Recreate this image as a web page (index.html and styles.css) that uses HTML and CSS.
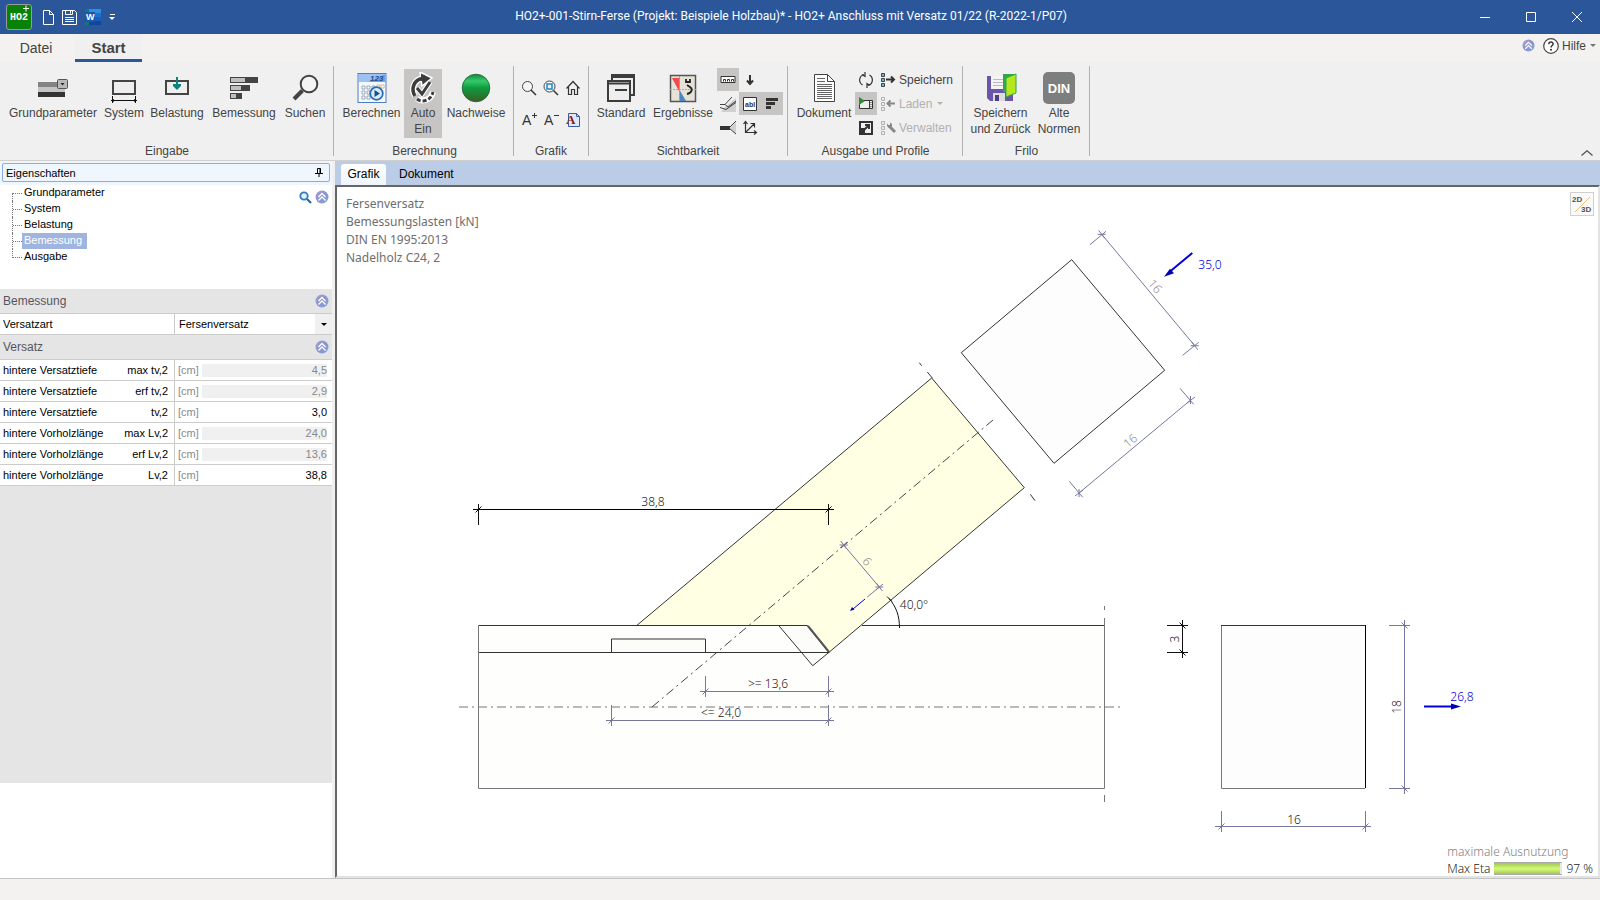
FILE: index.html
```html
<!DOCTYPE html>
<html lang="de">
<head>
<meta charset="utf-8">
<title>HO2+ Anschluss mit Versatz</title>
<link rel="stylesheet" href="styles.css">
</head>
<body>
<svg class="defs" aria-hidden="true">
  <linearGradient id="lilac" x1="0" y1="0" x2="1" y2="1"><stop offset="0" stop-color="#a9a0cf"/><stop offset=".5" stop-color="#8b93d0"/><stop offset="1" stop-color="#7fa9d8"/></linearGradient>
  <symbol id="collapse" viewBox="0 0 14 14"><circle cx="7" cy="7" r="6.5" fill="url(#lilac)"/><path d="M3.5 7 7 3.5 10.500 7M3.500 10.500 7 7l3.500 3.500" fill="none" stroke="#fff" stroke-width="1.300"/></symbol>
  <symbol id="profile" viewBox="0 0 16 16"><path d="M.5 1.500h3v3h-3zM.5 6.500h3v3h-3zM.5 11.500h3v3h-3z" stroke="currentColor"/></symbol>
</svg>

<header class="titlebar">
  <div class="quick">
    <svg class="app-logo" viewBox="0 0 26 26" role="img" aria-label="HO2+"><rect x=".5" y=".5" width="25" height="25" rx="2.500" fill="#078207" stroke="#9a9a9a"/><text x="4" y="16" class="logo-text">HO2</text><path d="M20 1.500v6M17 4.500h6" stroke="#fff"/></svg>
    <button class="quick-btn" aria-label="Neu"><svg width="11" height="15" viewBox="0 0 11 15"><path d="M.5.5h6l4 4v10H.5zM6.500.5v4h4" fill="none" stroke="#fff"/></svg></button>
    <button class="quick-btn" aria-label="Sichern"><svg width="15" height="15" viewBox="0 0 15 15"><path d="M.5.5h12l2 2v12H.5zM3.500.5v4h7v-4M8.500 1v2.500M3 7.500h9M3 9.500h9M3 11.500h9" fill="none" stroke="#fff"/></svg></button>
    <button class="quick-btn" aria-label="Word"><svg width="16" height="16" viewBox="0 0 16 16"><path d="M4 0h12v4H4z" fill="#2b90e0"/><path d="M4 4h12v4H4z" fill="#1f70cc"/><path d="M4 8h12v4H4z" fill="#1a5cbd"/><path d="M4 12h12v4H4z" fill="#12459e"/><path d="M0 0h4v3H0zM0 13h4v3H0z" fill="#107a78"/><path d="M0 3h10v10H0z" fill="#1b55b0"/><text x="1" y="11" class="word-text">W</text></svg></button>
    <button class="quick-btn" aria-label="Anpassen"><svg width="7" height="7" viewBox="0 0 7 7"><path d="M1 .5h5" stroke="#fff"/><path d="M0 3h6L3 6z" fill="#fff"/></svg></button>
  </div>
  <h1 class="title">HO2+-001-Stirn-Ferse (Projekt: Beispiele Holzbau)* - HO2+ Anschluss mit Versatz 01/22 (R-2022-1/P07)</h1>
  <div class="window-buttons">
    <button aria-label="Minimieren"><svg width="10" height="10"><path d="M0 5.500h10" stroke="#fff"/></svg></button>
    <button aria-label="Maximieren"><svg width="10" height="10"><path d="M.5.5h9v9h-9z" fill="none" stroke="#fff"/></svg></button>
    <button aria-label="Schließen"><svg width="10" height="10"><path d="M0 0l10 10M10 0 0 10" stroke="#fff"/></svg></button>
  </div>
</header>

<nav class="ribbon-tabs">
  <button class="ribbon-tab">Datei</button>
  <button class="ribbon-tab is-active">Start</button>
  <div class="help">
    <button aria-label="Einklappen"><svg width="13" height="13"><use href="#collapse"/></svg></button>
    <button class="help-btn"><svg width="16" height="16" viewBox="0 0 16 16"><circle cx="8" cy="8" r="7.300" fill="#fff" stroke="#444" stroke-width="1.200"/><path d="M5.800 6.200c0-3 4.500-2.800 4.300-.2C10 7.500 8 7.600 8 9.500" fill="none" stroke="#333" stroke-width="1.500"/><circle cx="8" cy="11.700" r="1" fill="#333"/></svg>Hilfe<i class="caret"></i></button>
  </div>
</nav>

<section class="ribbon">
  <div class="group">
    <div class="tools">
      <button class="big w96"><svg width="32" height="32" viewBox="0 0 32 32"><path d="M1 10h27v5H1z" fill="#848484"/><path d="M1 15h27v5H1z" fill="#c4c4c4"/><path d="M1 20h27v5H1z" fill="#333"/><rect x="20.500" y="7.500" width="10" height="9" rx="1" fill="#b9b9b9" stroke="#555"/><path d="M23.500 11h4l-2 2.500z" fill="#222"/></svg>Grundparameter</button>
      <button class="big w46"><svg width="32" height="32" viewBox="0 0 32 32"><path d="M5 9h22v13H5z" fill="#eee" stroke="#444" stroke-width="2"/><path d="M3 28.500h26M4.500 24v7M27.500 24v7" stroke="#111"/><path d="M3 28.500l3-1.500v3zM29 28.500l-3-1.500v3z" fill="#111"/></svg>System</button>
      <button class="big w60"><svg width="32" height="32" viewBox="0 0 32 32"><path d="M5 9h22v13H5z" fill="#eee" stroke="#444" stroke-width="2"/><path d="M15 5h2v7h3v2l-4 4-4-4v-2h3z" fill="#0b8580"/></svg>Belastung</button>
      <button class="big w74"><svg width="32" height="32" viewBox="0 0 32 32"><path d="M2 5h28v6H2zM2 13h20v6H2zM2 21h12v6H2z" fill="#444"/><path d="M3 6h14v4H3zM3 14h10v4H3zM3 22h5v4H3z" fill="#bfbfbf"/></svg>Bemessung</button>
      <button class="big w48"><svg width="32" height="32" viewBox="0 0 32 32"><circle cx="20" cy="12" r="8.300" fill="#f4f4f4" stroke="#444" stroke-width="2"/><path d="M13.500 18.500 5 27" stroke="#444" stroke-width="4"/></svg>Suchen</button>
    </div>
    <h2>Eingabe</h2>
  </div>

  <div class="group">
    <div class="tools">
      <button class="big w65"><svg width="32" height="32" viewBox="0 0 32 32"><rect x="2" y="1.500" width="28" height="29" fill="#f3f8fe" stroke="#4f7fc4"/><path d="M2.500 2h27v8h-27z" fill="#6fa2ea"/><path d="M2.500 2h27L12 10H2.500z" fill="#9cc2f4"/><text x="14" y="9" class="tiny-num">123</text><g fill="#fff" stroke="#8793a8" stroke-width=".8"><path d="M6 14h3v3H6zM11 14h3v3h-3zM16 14h3v3h-3zM6 19h3v3H6zM11 19h3v3h-3zM6 24h3v3H6zM11 24h3v3h-3z"/><path d="M21 13h3v3h-3zM25 13h3v3h-3z" stroke="#e3a75a"/></g><circle cx="20.500" cy="21.500" r="6.300" fill="#d9ebfc" stroke="#2c6db0" stroke-width="1.800"/><path d="M18.500 18v7l5.500-3.500z" fill="#17518f"/></svg>Berechnen</button>
      <button class="big w38 is-on" aria-pressed="true"><svg width="32" height="32" viewBox="0 0 32 32"><g fill="none" stroke="#fff" stroke-width="6"><path d="M15 6.500C7 8 3.500 17 8 24"/><path d="M10 26.500c5 4 14 2 16-6.500"/></g><path d="M13 0l12 6-10 8z" fill="#3c3c3c" stroke="#fff" stroke-width="1.500"/><path d="M15 6.500C7 8 3.500 17 8 24" fill="none" stroke="#3c3c3c" stroke-width="3.500"/><path d="M14 3h4v6h-4z" fill="#3c3c3c"/><path d="M10 27c5 4 14 2 16-7" fill="none" stroke="#3c3c3c" stroke-width="3" stroke-dasharray="4 2"/><path d="M10 16l5 6 8-12" fill="none" stroke="#fff" stroke-width="5"/><path d="M10 16l5 6 8-12" fill="none" stroke="#3c3c3c" stroke-width="3"/></svg>Auto<br>Ein</button>
      <button class="big w68"><svg width="32" height="32" viewBox="0 0 32 32"><defs><linearGradient id="ball" x1="0" y1="0" x2="0" y2="1"><stop offset="0" stop-color="#0f8a3d"/><stop offset=".25" stop-color="#35c96a"/><stop offset=".5" stop-color="#0c9c3e"/><stop offset="1" stop-color="#3e5d24"/></linearGradient></defs><circle cx="16" cy="16" r="13.800" fill="url(#ball)" stroke="#17602d" stroke-width=".8"/></svg>Nachweise</button>
    </div>
    <h2>Berechnung</h2>
  </div>

  <div class="group">
    <div class="tools zoom-grid">
      <button aria-label="Zoom"><svg width="16" height="16" viewBox="0 0 16 16"><circle cx="6.500" cy="6.500" r="5" fill="#f7f7f7" stroke="#444"/><path d="M10 10l5 5" stroke="#333" stroke-width="1.500"/></svg></button>
      <button aria-label="Ausschnitt"><svg width="16" height="16" viewBox="0 0 16 16"><circle cx="6.500" cy="6.500" r="5.500" fill="#f7f7f7" stroke="#444"/><path d="M10.500 10.500l4.500 4.500" stroke="#333" stroke-width="1.500"/><rect x="4" y="4" width="5" height="5" fill="#e8f3fb" stroke="#1e86c8" stroke-width="1.500"/></svg></button>
      <button aria-label="Gesamtansicht"><svg width="16" height="16" viewBox="0 0 16 16"><path d="M1.500 8.500 8 1.500l6.500 7M3.500 7v7.500h3v-5h3v5h3V7" fill="none" stroke="#333" stroke-width="1.200"/></svg></button>
      <button aria-label="Schrift größer"><svg width="16" height="16" viewBox="0 0 16 16"><text x="1" y="13" class="glyph-a">A</text><path d="M11 3.500h5M13.500 1v5" stroke="#333"/></svg></button>
      <button aria-label="Schrift kleiner"><svg width="16" height="16" viewBox="0 0 16 16"><text x="1" y="13" class="glyph-a">A</text><path d="M11 3.500h5" stroke="#333"/></svg></button>
      <button aria-label="Schriftart"><svg width="16" height="16" viewBox="0 0 16 16"><path d="M3.500 1.500h8l3 3v10h-11z" fill="#dfe8f8" stroke="#3a5d9e"/><path d="M11.500 1.500v3h3" fill="none" stroke="#3a5d9e"/><text x="1" y="12" class="glyph-font">A</text></svg></button>
    </div>
    <h2>Grafik</h2>
  </div>

  <div class="group">
    <div class="tools">
      <button class="big w56"><svg width="32" height="32" viewBox="0 0 32 32"><path d="M7 3h22v20H7z" fill="#eee" stroke="#3c3c3c" stroke-width="2"/><path d="M6 5h24" stroke="#3c3c3c" stroke-width="2"/><path d="M3 9h22v20H3z" fill="#eee" stroke="#3c3c3c" stroke-width="2"/><path d="M3 11.500h22M10 18h12" stroke="#3c3c3c" stroke-width="2"/></svg>Standard</button>
      <button class="big w68"><svg width="32" height="32" viewBox="0 0 32 32"><path d="M3.500 3.500h25v26h-25z" fill="#e6e2d8" stroke="#555" stroke-width="1.500"/><path d="M3 17.500h26" stroke="#aaa" stroke-dasharray="2 1"/><path d="M5 6h7v13z" fill="#f04a4a"/><path d="M12 17v12h7z" fill="#4e86c1"/><path d="M12.500 4v25" stroke="#a99"/><path d="M19 7v3h4V7M20 22c5-1 6-5 3-7l-3-2" fill="none" stroke="#222" stroke-width="1.800"/></svg>Ergebnisse</button>
      <div class="mini-grid">
        <button class="is-on" aria-label="Bemaßung"><svg width="16" height="16" viewBox="0 0 16 16"><path d="M1 4.500h14v6H1z" fill="#fff" stroke="#333"/><path d="M3.500 9.500v-2h2v2M7.500 9.500v-2h2v2M11.500 9.500v-2h2v2" fill="none" stroke="#333"/></svg></button>
        <button aria-label="Lasten"><svg width="16" height="16" viewBox="0 0 16 16"><path d="M8 3v9M5 8.500l3 3.500 3-3.500" fill="none" stroke="#333" stroke-width="2"/></svg></button>
        <span></span>
        <button aria-label="Balken"><svg width="16" height="16" viewBox="0 0 16 16"><path d="M6 10 16 2v14H1z" fill="#d0d0d0"/><path d="M0 8.500h5L12 1M5 8.500l3 2.500 8-6M0 11.500l6 2 10-7" fill="none" stroke="#444"/></svg></button>
        <button class="is-on" aria-label="Beschriftung"><svg width="16" height="16" viewBox="0 0 16 16"><path d="M1.500 1.500h13v13h-13z" fill="#fff" stroke="#333"/><text x="3" y="11" class="glyph-abl">abl</text></svg></button>
        <button class="is-on" aria-label="Ausnutzung"><svg width="16" height="16" viewBox="0 0 16 16"><path d="M2 2h12v3H2zM2 6h9v3H2zM2 10h5v3H2z" fill="#333"/></svg></button>
        <button aria-label="Knoten"><svg width="16" height="16" viewBox="0 0 16 16"><path d="M10 8l6-6v13z" fill="#d0d0d0"/><path d="M0 6h10v4H0z" fill="#333"/><path d="M9 8l7-7M9 8l7 6" stroke="#444"/></svg></button>
        <button aria-label="Achsen"><svg width="16" height="16" viewBox="0 0 16 16"><path d="M3.500 2v10.500H14M3.500 12.500 12 4M1.500 4l2-2.500 2 2.500M12 10.500l2.500 2-2.500 2M8.500 3.500H12.500V7.500" fill="none" stroke="#333" stroke-width="1.200"/></svg></button>
      </div>
    </div>
    <h2>Sichtbarkeit</h2>
  </div>

  <div class="group">
    <div class="tools">
      <button class="big w62"><svg width="32" height="32" viewBox="0 0 32 32"><path d="M6.500 2.500h13l7 7v20h-20z" fill="#fff" stroke="#444"/><path d="M19.500 2.500v7h7" fill="none" stroke="#444"/><path d="M9 6.500h8M9 9.500h8M9 12.500h15M9 14.500h15M9 16.500h15M9 18.500h15M9 20.500h15M9 22.500h15M9 24.500h15M9 26.500h15" stroke="#666"/></svg>Dokument</button>
      <div class="mini-col">
        <button aria-label="Aktualisieren"><svg width="16" height="16" viewBox="0 0 16 16"><path d="M6 2.500C1 4 0 10 4.500 13M10 13.500c5-1.500 6-7.500 1.500-10.500M7 0v4.500L4 2.500M9 16v-4.500l3 2" fill="none" stroke="#333" stroke-width="1.200"/></svg></button>
        <button class="is-on" aria-label="Vorschau"><svg width="16" height="16" viewBox="0 0 16 16"><path d="M1.500 4.500h13v8h-13z" fill="#eee" stroke="#333"/><path d="M11.500 5v8" stroke="#333"/><path d="M13 6v6" stroke="#333" stroke-dasharray="1 1"/><path d="M1 1l6 4-6 4z" fill="#2e8b2e"/></svg></button>
        <button aria-label="Maximieren"><svg width="16" height="16" viewBox="0 0 16 16"><path d="M2 2h12v12H2z" fill="none" stroke="#333" stroke-width="2"/><path d="M1 8h6v6H1z" fill="#333"/><path d="M6 10l5-5M7 5h4v4" fill="none" stroke="#333" stroke-width="2"/></svg></button>
      </div>
      <div class="profile-col">
        <button><svg width="16" height="16" viewBox="0 0 16 16" fill="#6db3e0"><use href="#profile"/><path d="M5 7.500h8M10 4.500l3 3-3 3" fill="none" stroke="#333" stroke-width="2"/></svg>Speichern</button>
        <button disabled><svg width="16" height="16" viewBox="0 0 16 16" fill="#eee"><use href="#profile"/><path d="M14 7.500H7M9.500 4.500l-3 3 3 3" fill="none" stroke="#888" stroke-width="2"/></svg>Laden<i class="caret"></i></button>
        <button disabled><svg width="16" height="16" viewBox="0 0 16 16" fill="#eee"><use href="#profile"/><path d="M8 6l6 6" stroke="#888" stroke-width="3"/><path d="M6 3v3l2 2 3-1V4L9 2.500V5H7z" fill="#888"/></svg>Verwalten</button>
      </div>
    </div>
    <h2>Ausgabe und Profile</h2>
  </div>

  <div class="group">
    <div class="tools">
      <button class="big w65"><svg width="32" height="32" viewBox="0 0 32 32"><path d="M2 4h26v25H5l-3-3z" fill="#6a55a8"/><path d="M6 4h14v13H6z" fill="#f4f4f4"/><path d="M8 7.500h10M8 10.500h10M8 13.500h10" stroke="#bbb"/><path d="M8 21h12v8H8z" fill="#ddd"/><path d="M10 23h4v6h-4z" fill="#4b3f86"/><path d="M18 2h13v18H18z" fill="#2fa84a"/><path d="M21 6l10-4v19l-10 4z" fill="#b6e61d" stroke="#2fa84a"/></svg>Speichern<br>und Zurück</button>
      <button class="big w52"><svg width="32" height="32" viewBox="0 0 32 32"><rect width="32" height="32" rx="5" fill="#7d7f7e"/><text x="16" y="21" class="din">DIN</text></svg>Alte<br>Normen</button>
    </div>
    <h2>Frilo</h2>
  </div>
  <button class="ribbon-collapse" aria-label="Menüband reduzieren"><svg width="12" height="6"><path d="M.5 5.500 6 .8l5.500 4.700" fill="none" stroke="#555" stroke-width="1.300"/></svg></button>
</section>

<main class="workspace">
  <aside class="properties">
    <div class="panel-head"><div class="panel-title">Eigenschaften<svg width="8" height="9" viewBox="0 0 8 9"><path d="M2.500 5V.5h3V5M5 .5V5M0 5.500h8M4 5.500V9" fill="none" stroke="#000"/></svg></div></div>
    <div class="tree-area">
      <ul class="tree">
        <li><a href="#grundparameter">Grundparameter</a></li>
        <li><a href="#system">System</a></li>
        <li><a href="#belastung">Belastung</a></li>
        <li><a href="#bemessung" class="is-selected">Bemessung</a></li>
        <li><a href="#ausgabe">Ausgabe</a></li>
      </ul>
      <div class="tree-tools">
        <button aria-label="Suchen"><svg width="13" height="13" viewBox="0 0 13 13"><circle cx="5" cy="5" r="3.700" fill="#e4f1fb" stroke="#2f7cc4" stroke-width="1.800"/><path d="M8 8l4 4" stroke="#2766a5" stroke-width="2.200"/></svg></button>
        <button aria-label="Einklappen"><svg width="14" height="14"><use href="#collapse"/></svg></button>
      </div>
    </div>
    <div class="props">
      <h3>Bemessung<button aria-label="Einklappen"><svg width="14" height="14"><use href="#collapse"/></svg></button></h3>
      <div class="prop"><label for="art">Versatzart</label><div class="value combo"><select id="art"><option>Fersenversatz</option></select><span class="drop"><i class="caret"></i></span></div></div>
      <h3>Versatz<button aria-label="Einklappen"><svg width="14" height="14"><use href="#collapse"/></svg></button></h3>
      <div class="prop"><label for="p1">hintere Versatztiefe<span>max tv,2</span></label><div class="value"><span>[cm]</span><input id="p1" value="4,5" readonly></div></div>
      <div class="prop"><label for="p2">hintere Versatztiefe<span>erf tv,2</span></label><div class="value"><span>[cm]</span><input id="p2" value="2,9" readonly></div></div>
      <div class="prop"><label for="p3">hintere Versatztiefe<span>tv,2</span></label><div class="value"><span>[cm]</span><input id="p3" value="3,0"></div></div>
      <div class="prop"><label for="p4">hintere Vorholzlänge<span>max Lv,2</span></label><div class="value"><span>[cm]</span><input id="p4" value="24,0" readonly></div></div>
      <div class="prop"><label for="p5">hintere Vorholzlänge<span>erf Lv,2</span></label><div class="value"><span>[cm]</span><input id="p5" value="13,6" readonly></div></div>
      <div class="prop"><label for="p6">hintere Vorholzlänge<span>Lv,2</span></label><div class="value"><span>[cm]</span><input id="p6" value="38,8"></div></div>
    </div>
  </aside>

  <section class="view">
    <div class="view-tabs"><button class="is-active">Grafik</button><button>Dokument</button></div>
    <div class="canvas">
      <svg class="drawing" viewBox="337 187 1261 689" preserveAspectRatio="xMidYMid meet">
        <defs>
          <path id="slash" d="M-3 3 3-3"/>
          <path id="star" d="M-4 0H4M-3-4 3 4"/>
        </defs>
        <g class="solid">
          <path d="M478.500 625.500h626v162.500h-626z" class="wood-fill"/>
          <path d="M1071.700 259.700 961.300 352.700 1054 463.300l110.700-93z" class="end-fill edge"/>
          <path d="M1221 625.500h144.500V788H1221z" class="end-fill"/>
          <path d="M931.700 378l92.600 109.700L829 652.300l-22-26.800H636.700z" class="strut edge"/>
          <path d="M778.700 625.500l34 40.200 16.300-13.400-22-26.800z" class="notch edge"/>
          <path d="M611.500 652.500v-13.500h94v13.500" class="notch edge"/>
          <path d="M808 626l21 26" class="thick"/>
          <path d="M478.500 625.500h329M862 625.500h242.500M478.500 652.500H829M1221 625.500h144.500" class="edge"/>
          <path d="M478.500 626v162.500H1104.500V618M1104.500 606v4M1104.500 795v7M1221.500 626v162.500H1365" class="soft"/>
          <path d="M1365.500 625v163" class="edge strong"/>
          <path d="M927.300 372l5 6M919.300 362.700l2.400 3M1030.300 494.300l4.700 6.400" class="edge"/>
        </g>
        <path d="M459 707h664" class="axis-soft"/>
        <path d="M652 707 993 420" class="axis"/>

        <g class="dim-black">
          <path d="M473 509.500h361" class="strong"/><path d="M478.500 504v21M828.500 504v21"/>
          <use href="#slash" x="478.500" y="509.500"/><use href="#slash" x="828.500" y="509.500"/>
          <path d="M1182.500 620v38M1167 625.500h21M1167 652.500h21M1179.500 622.500l6 6M1179.500 649.500l6 6"/>
          <path d="M889 598.500c7 8 10.500 17 10.500 29.500M887 596.500l5 5"/>
        </g>
        <g class="dim">
          <path d="M700 691.500h134M705.500 676v21M828.500 676v21M606 720.500h228M611.500 705v21M828.500 705v21"/>
          <use href="#slash" x="705.500" y="691.500"/><use href="#slash" x="828.500" y="691.500"/><use href="#slash" x="611.500" y="720.500"/><use href="#slash" x="828.500" y="720.500"/>
          <path d="M1404.500 620v174M1389 625.500h21M1389 788.500h21M1401.500 622.500l6 6M1401.500 785.500l6 6M1215 826.500h156M1221.500 811v21M1365.500 811v21"/>
          <use href="#slash" x="1221.500" y="826.500"/><use href="#slash" x="1365.500" y="826.500"/>
          <path d="M1101.700 234.300l93 111.400M1090 244.700l16-13.400M1182.700 355.300l16-13M1079 493l111.700-93M1069.300 481.300l13.400 16M1180 388.300l13.700 16M843.700 545l35.600 42M879.300 587l-12 10"/>
          <use href="#star" x="1101.700" y="234.300"/><use href="#star" x="1194.700" y="345.700"/><use href="#star" x="843.700" y="545"/><use href="#star" x="879.300" y="587"/>
          <path d="M1075 496l8-6M1079 489v8M1187 403l8-6M1190.500 396v8M840 548l7-6M876 590l7-6"/>
        </g>
        <g class="force">
          <path d="M1192.300 253 1170 271.500M1424 706.500h28"/><path d="M865 599l-12 10" class="thin"/>
          <path d="M1164 276.700l6-8 4 4.500zM1461 706.500l-10-3v6zM850 611l2-4 2.500 2.500z" class="head"/>
        </g>
        <g class="lbl">
          <text x="653" y="506">38,8</text><text x="768" y="688">&gt;= 13,6</text><text x="721" y="717">&lt;= 24,0</text>
          <text x="914" y="609">40,0°</text><text x="1294" y="824">16</text>
          <text transform="translate(1179 639) rotate(-90)">3</text><text transform="translate(1401 707) rotate(-90)">18</text>
          <text class="gray" transform="translate(1152 289) rotate(50)">16</text><text class="gray" transform="translate(1133 444) rotate(-40)">16</text><text class="gray" transform="translate(864 564) rotate(50)">6</text>
          <text class="blue" x="1210" y="269">35,0</text><text class="blue" x="1462" y="701">26,8</text>
        </g>
      </svg>
      <p class="info">Fersenversatz<br>Bemessungslasten [kN]<br>DIN EN 1995:2013<br>Nadelholz C24, 2</p>
      <button class="toggle-3d" aria-label="2D/3D"><svg width="22" height="22" viewBox="0 0 22 22"><path d="M4 19 19 4" stroke="#f0c070"/><text x="1" y="9" class="dims">2D</text><text x="10" y="19" class="dims">3D</text></svg></button>
      <div class="utilization">
        <span class="muted">maximale Ausnutzung</span>
        <div class="eta"><span>Max Eta</span><div class="bar"><div class="bar-fill" style="width:97%"></div></div><span>97 %</span></div>
      </div>
    </div>
  </section>
</main>
<footer class="status"></footer>
</body>
</html>
```

FILE: styles.css
```css
* { box-sizing: border-box; }
body {
  margin: 0;
  height: 100vh;
  display: flex;
  flex-direction: column;
  overflow: hidden;
  background: #f0f0f0;
  color: #444;
  font: 12px/16px "Liberation Sans", Arial, sans-serif;
}
button, input, select { font: inherit; color: inherit; border: 0; padding: 0; margin: 0; background: none; }
h1, h2, h3, p, ul { margin: 0; padding: 0; font-weight: normal; }
svg { display: block; flex: none; }
.defs { position: absolute; width: 0; height: 0; }
.caret { display: inline-block; border: 3px solid transparent; border-top-color: currentColor; border-bottom: 0; }

/* title bar */
.titlebar { flex: none; height: 34px; display: flex; align-items: center; background: #2b579a; color: #fff; }
.quick { display: flex; align-items: center; width: 120px; padding-left: 6px; gap: 8px; }
.quick-btn { display: flex; }
.quick-btn:nth-of-type(1) { margin-left: 3px; }
.app-logo { width: 26px; height: 26px; }
.logo-text { font: bold 10px "Liberation Mono", monospace; fill: #fff; }
.word-text { font: bold 9px "Liberation Sans", sans-serif; fill: #fff; }
.title { flex: 1; padding-bottom: 2px; text-align: center; font: 12px/16px Roboto, sans-serif; white-space: nowrap; }
.window-buttons { display: flex; }
.window-buttons button { width: 46px; height: 34px; display: flex; align-items: center; justify-content: center; }

/* ribbon tabs */
.ribbon-tabs { flex: none; height: 28px; display: flex; background: #f3f2f1; font-size: 14px; }
.ribbon-tab { width: 72px; padding-top: 2px; border-bottom: 3px solid transparent; }
.ribbon-tab.is-active { width: 67px; margin-left: 3px; font-size: 15px; font-weight: bold; background: #f0f0f0; border-color: #2b579a; }
.help { margin-left: auto; display: flex; align-items: center; gap: 8px; padding: 0 4px 5px 0; font-size: 12px; }
.help-btn { display: flex; align-items: center; gap: 3px; }
.help-btn .caret { margin-left: 1px; color: #777; }

/* ribbon */
.ribbon { flex: none; height: 99px; display: flex; padding-top: 4px; border-bottom: 1px solid #d0cfce; }
.group { display: flex; flex-direction: column; height: 90px; padding: 2px 4px 0 5px; border-right: 1px solid #b1b1b1; }
.group:nth-child(3), .group:nth-child(4) { padding-left: 4px; }
.group:nth-child(2) { padding-right: 3px; }
.tools { flex: 1; display: flex; align-items: flex-start; }
.group h2 { font-size: 12px; text-align: center; line-height: 10px; }
.big { display: flex; flex-direction: column; align-items: center; height: 69px; margin-top: 1px; padding-top: 3px; white-space: nowrap; }
.big svg { margin-bottom: 1px; }
.is-on { background: #c6c5c4; }
.w38 { width: 38px; } .w46 { width: 46px; } .w48 { width: 48px; } .w52 { width: 52px; }
.w56 { width: 56px; } .w60 { width: 60px; } .w62 { width: 62px; } .w65 { width: 65px; }
.w68 { width: 68px; } .w74 { width: 74px; } .w96 { width: 96px; }
.zoom-grid { display: grid; grid-template-columns: repeat(3, 22px); grid-auto-rows: 32px; align-items: stretch; align-content: start; padding-top: 4px; }
.mini-grid { display: grid; grid-template-columns: repeat(3, 22px); grid-auto-rows: 23px; row-gap: 1px; }
.mini-col { display: grid; grid-template-columns: 22px; grid-auto-rows: 23px; row-gap: 1px; }
.profile-col { display: grid; grid-auto-rows: 23px; row-gap: 1px; width: 81px; padding-left: 4px; }
.zoom-grid button, .mini-grid button, .mini-col button { display: flex; align-items: center; justify-content: center; }
.profile-col button { display: flex; align-items: center; gap: 2px; }
.profile-col button:disabled { color: #b1b1b1; }
.profile-col .caret { margin-left: 3px; }
.ribbon-collapse { margin: auto 7px 4px auto; }
.tiny-num { font: italic bold 8px "Liberation Sans", sans-serif; fill: #2a4f8f; }
.glyph-a { font: 14px "Liberation Sans", sans-serif; fill: #333; }
.glyph-font { font: bold 13px "Liberation Serif", serif; fill: #8c1420; }
.glyph-abl { font: bold 7px "Liberation Sans", sans-serif; fill: #333; }
.din { font: bold 13px "Liberation Sans", sans-serif; fill: #fff; text-anchor: middle; }

/* workspace */
.workspace { flex: 1; display: flex; min-height: 0; font-size: 11px; color: #000; }
.properties { width: 332px; flex: none; display: flex; flex-direction: column; background: #fff; }
.panel-head { height: 24px; padding: 2px; background: #eff6fe; }
.panel-title { height: 19px; display: flex; align-items: center; justify-content: space-between; padding: 0 6px 0 3px; border: 1px solid #86ade4; border-radius: 2px; }
.tree-area { height: 104px; display: flex; justify-content: space-between; padding: 0 3px 0 12px; }
.tree { list-style: none; line-height: 14px; }
.tree li { display: flex; height: 16px; }
.tree li::before { content: ""; width: 9px; height: 16px; border-left: 1px dotted #777; background: repeating-linear-gradient(90deg, #777 0 1px, transparent 1px 2px) 0 8px / 9px 1px no-repeat; }
.tree li:first-child::before { height: 8px; align-self: flex-end; background-position: 0 0; }
.tree li:last-child::before { height: 9px; align-self: flex-start; }
.tree a { height: 16px; color: #000; text-decoration: none; padding: 0 5px 0 2px; }
.tree .is-selected { color: #fff; background: #9fb4de; }
.tree-tools { display: flex; gap: 3px; height: 24px; align-items: center; }
.tree-tools button { display: flex; }
.props { height: 494px; background: #e5e5e5; }
.props h3 { height: 25px; display: flex; align-items: center; justify-content: space-between; padding: 0 3px; font-size: 12px; color: #555560; border-bottom: 1px solid #ccc; }
.props h3 button { display: flex; }
.prop { display: flex; height: 21px; background: #fff; border-bottom: 1px solid #ccc; }
.prop label { width: 175px; flex: none; display: flex; justify-content: space-between; align-items: center; padding: 0 6px 0 3px; border-right: 1px solid #ccc; }
.value { flex: 1; min-width: 0; display: flex; align-items: center; gap: 3px; padding: 0 5px 0 3px; color: #8a8a8a; }
.value input { flex: 1; min-width: 0; height: 13px; text-align: right; color: #000; }
.value input:read-only { background: #f0f0f0; color: #888; }
.combo { padding-right: 0; }
.combo select { flex: 1; align-self: stretch; padding-left: 1px; color: #000; appearance: none; }
.drop { width: 17px; height: 20px; display: flex; align-items: center; justify-content: center; color: #000; background: #f0f0f0; pointer-events: none; }

/* view */
.view { flex: 1; display: flex; flex-direction: column; min-width: 0; margin-left: 3px; background: #bacce6; }
.view-tabs { height: 24px; flex: none; display: flex; padding: 3px 0 0 6px; }
.view-tabs button { padding: 0 6px 1px; height: 21px; font-size: 12px; line-height: 16px; color: #000; }
.view-tabs .is-active { width: 45px; border-radius: 3px 3px 0 0; background: linear-gradient(#fff, #eef5fd); }
.view-tabs button + button { margin-left: 7px; }
.canvas { flex: 1; min-height: 0; display: grid; background: #fff; border: 2px solid #666; border-right-color: #e3e3e3; border-bottom-color: #e3e3e3; font: 300 12px/18px "Noto Sans", "Open Sans", sans-serif; }
.canvas > * { grid-area: 1 / 1; }
.drawing { width: 100%; height: 100%; min-height: 0; }
.info { align-self: start; justify-self: start; padding: 8px 0 0 9px; color: #6e6e6e; }
.toggle-3d { align-self: start; justify-self: end; margin: 5px 4px 0 0; border: 1px solid #d0d0d0; background: #fafafa; }
.dims { font: bold 8px "Liberation Sans", sans-serif; fill: #555; }
.utilization { align-self: end; justify-self: end; padding-right: 5px; }
.muted { color: #808080; }
.eta { display: flex; align-items: center; gap: 4px; line-height: 15px; color: #222; }
.bar { width: 68px; height: 13px; background: #e8e8e8; border: solid #aaa; border-width: 1px 0; }
.bar-fill { height: 100%; background: linear-gradient(#a4c454, #cdf573 45%, #cdf573 60%, #a4c454); }
.status { flex: none; height: 22px; background: #f3f2f1; border-top: 1px solid #c4c4c4; }

/* drawing */
.drawing path { fill: none; }
.drawing .wood-fill { fill: #fefefd; }
.drawing .end-fill { fill: #fefdfd; }
.drawing .strut { fill: #ffffe3; }
.drawing .notch { fill: #fcfdf8; }
.edge { stroke: #333; stroke-width: 1; }
.soft { stroke: #777; }
.thick { stroke: #555; stroke-width: 2; }
.strong { stroke: #000; stroke-width: 1; }
.axis { stroke: #444; stroke-dasharray: 9 4 2 4; }
.axis-soft { stroke: #777; stroke-dasharray: 9 4 2 4; }
.dim-black { stroke: #111; }
.dim { stroke: #77779f; }
.force { stroke: #0000e0; stroke-width: 2; }
.force .thin { stroke-width: 1; }
.drawing .head { fill: #0000b0; stroke: none; }
.lbl text { font: 300 12px "Noto Sans", "Open Sans", sans-serif; fill: #222; text-anchor: middle; }
.lbl .gray { fill: #8a8a8a; }
.lbl .blue { fill: #0000e0; }
```
